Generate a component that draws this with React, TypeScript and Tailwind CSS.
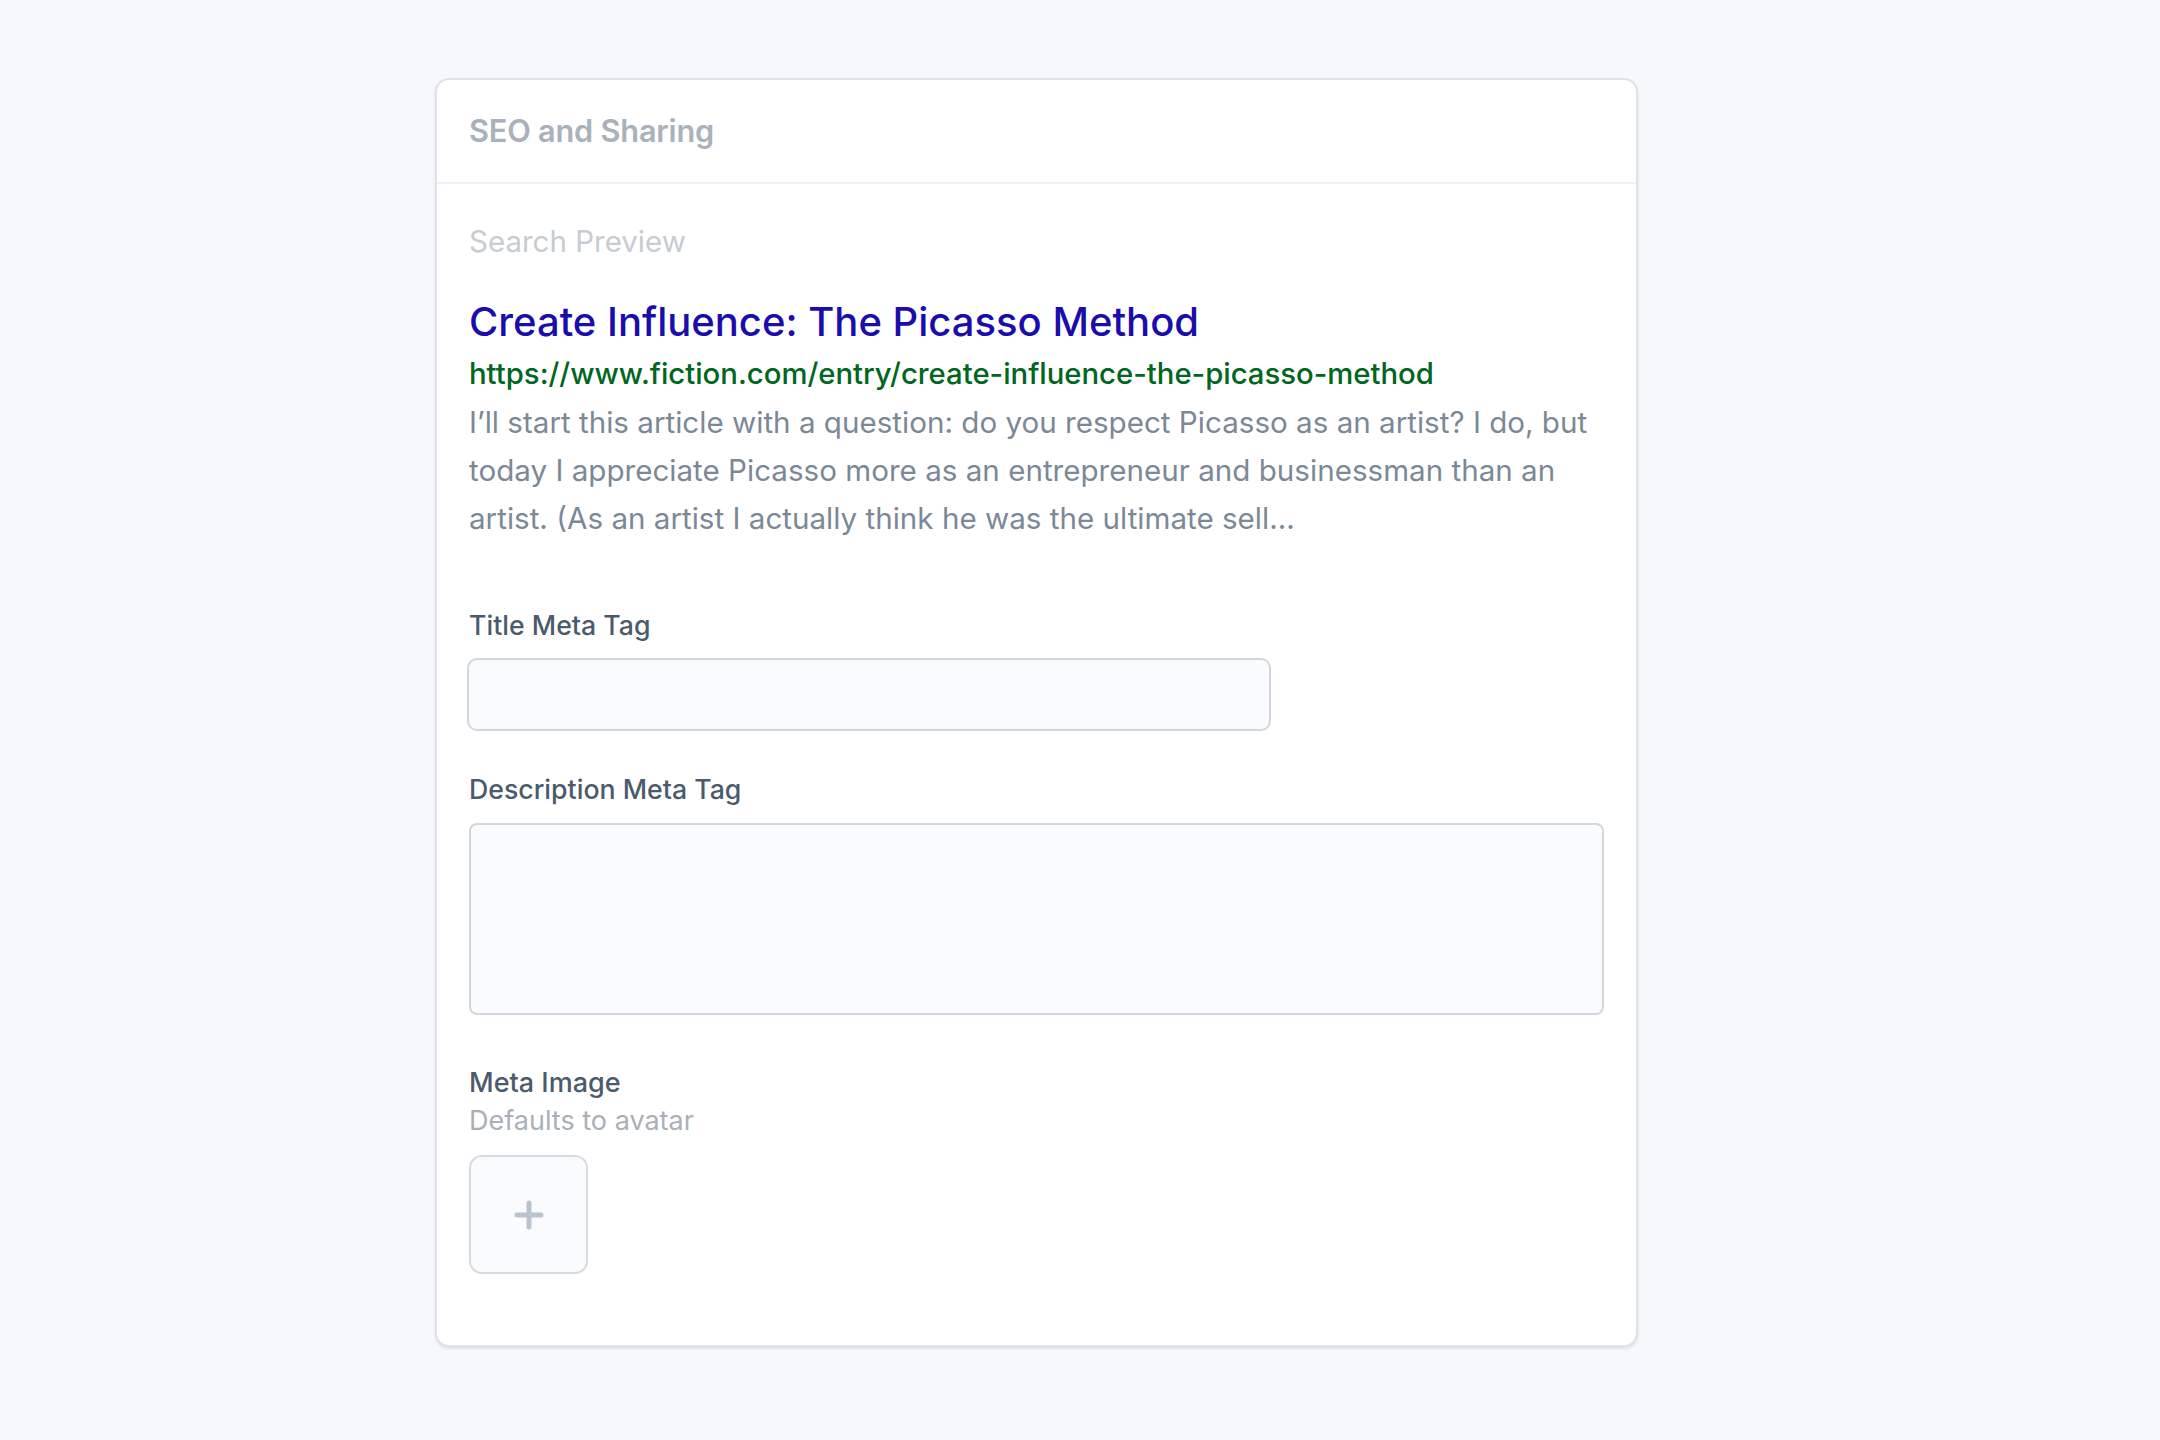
import React from 'react';

const desc =
  'I\u2019ll start this article with a question: do you respect Picasso as an artist? I do, but today I appreciate Picasso more as an entrepreneur and businessman than an artist. (As an artist I actually think he was the ultimate sell...';

export default function App() {
  return (
    <div className="min-h-screen bg-[#f6f8fb] pt-[78px] pl-[435px] font-['Inter',sans-serif]">
      <div className="w-[1203px] rounded-[14px] border-2 border-[#dfe3e8] bg-white shadow-[0_2px_3px_rgba(150,160,175,0.25)]">
        {/* Header */}
        <div className="flex h-[104px] items-center border-b-2 border-[#eef0f3] px-[32px]">
          <h2 className="text-[30.7px] font-semibold tracking-[-0.2px] text-[#a9b1ba]">SEO and Sharing</h2>
        </div>

        <div className="px-[32px] pt-[35px] pb-[71px]">
          {/* Search preview */}
          <div className="text-[29.5px] leading-[44px] text-[#c6ccd2]">Search Preview</div>
          <div className="mt-[31px] text-[40px] leading-[56px] font-medium text-[#1a0dab]">
            Create Influence: The Picasso Method
          </div>
          <div className="text-[29.3px] leading-[48px] font-medium text-[#006621]">
            https://www.fiction.com/entry/create-influence-the-picasso-method
          </div>
          <p className="text-[29.6px] leading-[48px] text-[#7b8896]">{desc}</p>

          {/* Title */}
          <label className="mt-[63px] block text-[26.7px] leading-[40px] font-medium text-[#4b5b6c]">Title Meta Tag</label>
          <input
            type="text"
            className="mt-[13px] -ml-[2px] block h-[73px] w-[804px] rounded-[10px] border-2 border-[#d2d7dd] bg-[#fafbfd] px-4 text-[28px] outline-none"
          />

          {/* Description */}
          <label className="mt-[38px] block text-[26.7px] leading-[40px] font-medium text-[#4b5b6c]">Description Meta Tag</label>
          <textarea className="mt-[14px] block h-[192px] w-full resize-none rounded-[8px] border-2 border-[#d2d7dd] bg-[#fafbfd] p-4 text-[28px] outline-none" />

          {/* Meta image */}
          <div className="mt-[49px] text-[27px] leading-[38px] font-medium text-[#4b5b6c]">Meta Image</div>
          <div className="text-[27px] leading-[38px] text-[#a9b0b8]">Defaults to avatar</div>
          <button className="mt-[15px] flex h-[119px] w-[119px] items-center justify-center rounded-[13px] border-2 border-[#d6dbe1] bg-[#fafbfd]">
            <svg width="30" height="30" viewBox="0 0 30 30">
              <path d="M15 3v24M3 15h24" stroke="#b9c4cf" strokeWidth="5" strokeLinecap="round" />
            </svg>
          </button>
        </div>
      </div>
    </div>
  );
}
